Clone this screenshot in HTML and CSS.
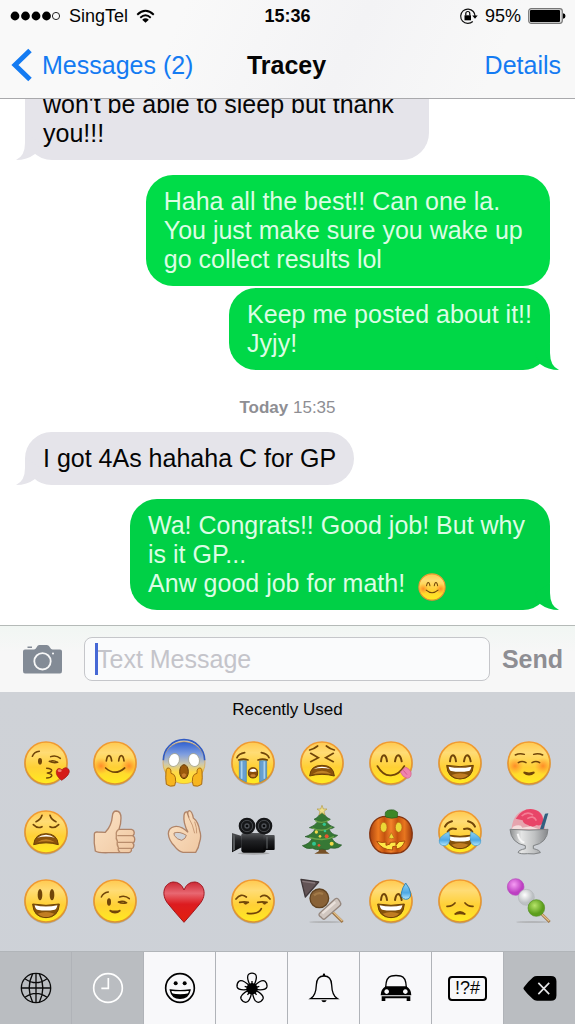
FILE: index.html
```html
<!DOCTYPE html>
<html lang="en">
<head>
<meta charset="utf-8">
<meta name="viewport" content="width=device-width, initial-scale=1">
<title>Tracey</title>
<link rel="stylesheet" href="styles.css">
</head>
<body>
<svg class="defs" width="0" height="0" aria-hidden="true">
  <defs>
    <linearGradient id="skin" x1="0" y1="0" x2="0" y2="1"><stop offset="0" stop-color="#ffc94f"/><stop offset=".25" stop-color="#ffdc75"/><stop offset=".6" stop-color="#ffd035"/><stop offset="1" stop-color="#ffec1f"/></linearGradient>
    <linearGradient id="rim" x1="0" y1="0" x2="0" y2="1"><stop offset="0" stop-color="#f29b31"/><stop offset="1" stop-color="#dc9430"/></linearGradient>
    <radialGradient id="cheek"><stop offset="0" stop-color="#ff8526" stop-opacity=".9"/><stop offset="1" stop-color="#ff9a2e" stop-opacity="0"/></radialGradient>
    <linearGradient id="fear" x1="0" y1="0" x2="0" y2="1"><stop offset="0" stop-color="#2f5fd0"/><stop offset=".3" stop-color="#7f9ee0"/><stop offset=".52" stop-color="#c9c7b4"/><stop offset=".72" stop-color="#ffd94a"/><stop offset="1" stop-color="#ffe52e"/></linearGradient>
    <linearGradient id="red" x1="0" y1="0" x2="0" y2="1"><stop offset="0" stop-color="#cb2834"/><stop offset=".28" stop-color="#e86872"/><stop offset=".55" stop-color="#dc1c20"/><stop offset="1" stop-color="#e3200c"/></linearGradient>
    <linearGradient id="hand" x1="0" y1="0" x2="1" y2="1"><stop offset="0" stop-color="#fbe3c6"/><stop offset="1" stop-color="#f0c8a2"/></linearGradient>
    <linearGradient id="tear" x1="0" y1="0" x2="0" y2="1"><stop offset="0" stop-color="#8fd2f5"/><stop offset=".6" stop-color="#4ea9e4"/><stop offset="1" stop-color="#b5e6fb"/></linearGradient>
    <linearGradient id="pumpkin" x1="0" y1="0" x2="1" y2="0"><stop offset="0" stop-color="#a8410f"/><stop offset=".2" stop-color="#ee7a20"/><stop offset=".35" stop-color="#c4530f"/><stop offset=".5" stop-color="#f3832a"/><stop offset=".65" stop-color="#c4530f"/><stop offset=".82" stop-color="#e8761f"/><stop offset="1" stop-color="#9c3a0c"/></linearGradient>
    <linearGradient id="glass" x1="0" y1="0" x2="1" y2="0"><stop offset="0" stop-color="#8d8f90"/><stop offset=".3" stop-color="#e4e5e5"/><stop offset=".65" stop-color="#bfc1c2"/><stop offset="1" stop-color="#85878a"/></linearGradient>
    <linearGradient id="metal" x1="0" y1="0" x2="0" y2="1"><stop offset="0" stop-color="#55575a"/><stop offset=".4" stop-color="#202124"/><stop offset="1" stop-color="#050506"/></linearGradient>
    <radialGradient id="pink" cx=".4" cy=".35"><stop offset="0" stop-color="#f69cf4"/><stop offset="1" stop-color="#bd3fc2"/></radialGradient>
    <radialGradient id="pearl" cx=".4" cy=".35"><stop offset="0" stop-color="#ffffff"/><stop offset="1" stop-color="#bcc0c3"/></radialGradient>
    <radialGradient id="lime" cx=".4" cy=".35"><stop offset="0" stop-color="#b7e46a"/><stop offset="1" stop-color="#5c9e1c"/></radialGradient>
    <symbol id="face" viewBox="-72 -72 144 144"><circle cy="3" r="65" fill="#7d7468" opacity=".4"/><circle r="63" fill="url(#skin)" stroke="url(#rim)" stroke-width="5"/></symbol>
    <symbol id="happy" viewBox="-72 -72 144 144"><g fill="none" stroke="#704509" stroke-width="6" stroke-linecap="round"><path d="M-30-5Q-28-23-21-23Q-14-22-12-5M12-5Q15-23 22-23Q29-22 32-5"/></g></symbol>
    <symbol id="laugh" viewBox="-72 -72 144 144"><path d="M-40 9Q0 17 40 9Q38 49 0 50Q-38 49-40 9Z" fill="#85520b" stroke="#6b4006" stroke-width="3"/><path d="M-34 13Q0 20 34 13Q32 25 26 26Q0 31-26 26Q-32 25-34 13Z" fill="#fff"/><path d="M-25 38Q0 28 25 38Q14 48 0 48Q-14 48-25 38Z" fill="#c17d22"/></symbol>
    <symbol id="blush" viewBox="-72 -72 144 144"><circle cx="-42" cy="9" r="25" fill="url(#cheek)"/><circle cx="42" cy="9" r="25" fill="url(#cheek)"/></symbol>
    <symbol id="blushing" viewBox="-72 -72 144 144"><use href="#face" x="-72" y="-72" width="144" height="144"/><use href="#blush" x="-72" y="-72" width="144" height="144"/><path d="M-26-6Q-24-22-18-22Q-12-22-10-6M11-6Q13-22 19-22Q25-22 27-6M-28 15Q0 40 29 15" fill="none" stroke="#704509" stroke-width="5" stroke-linecap="round"/></symbol>
    <symbol id="tail" viewBox="0 0 24 27"><path d="M15 0V10Q15 23 24 27Q13 27 5 21L0 10Z" fill="currentColor"/></symbol>
  </defs>
</svg>

<div class="phone">
  <header class="top">
    <div class="status">
      <div class="status-left">
        <svg class="signal" viewBox="0 0 50 10" role="img" aria-label="Signal: 4 of 5"><circle cx="5" cy="5" r="4.4"/><circle cx="15.5" cy="5" r="4.4"/><circle cx="26" cy="5" r="4.4"/><circle cx="36.5" cy="5" r="4.4"/><circle cx="46" cy="5" r="3.6" fill="none" stroke="#222" stroke-width="1"/></svg>
        <span>SingTel</span>
        <svg class="wifi" viewBox="0 0 20 15" role="img" aria-label="Wi-Fi"><g fill="none" stroke="#000" stroke-width="2"><path d="M1.3 5.6Q10-2.6 18.700 5.600M4.500 8.800Q10 3.800 15.500 8.800"/></g><path d="M10 14L6.500 10.800Q10 7.800 13.500 10.800Z"/></svg>
      </div>
      <time class="clock">15:36</time>
      <div class="status-right">
        <svg class="lock" viewBox="0 0 19 17" role="img" aria-label="Rotation lock"><path d="M14.300 3.500A7.200 7.200 0 1 0 13.800 13.500M14.300 3.500Q16 5.500 16 8" fill="none" stroke="#111" stroke-width="1.200"/><path d="M13.200 7.500H18.700L16 10.800Z"/><rect x="5.500" y="7.300" width="6.500" height="5"/><path d="M6.800 7.500V5.500a2 2 0 0 1 4 0V7.500" fill="none" stroke="#000" stroke-width="1.200"/></svg>
        <span>95%</span>
        <svg class="battery" viewBox="0 0 38 16" role="img" aria-label="Battery"><rect x=".7" y=".7" width="33.600" height="14.600" rx="2.500" fill="#ddd" stroke="#777" stroke-width="1.200"/><rect x="2" y="2" width="30" height="12" rx="1"/><path d="M35 5.200Q37.500 5.500 37.500 8T35 10.800Z"/></svg>
      </div>
    </div>
    <nav class="nav">
      <a class="back" href="#"><svg class="chevron" viewBox="0 0 20 32" aria-hidden="true"><path d="M18 1.500L3 16L18 30.500" fill="none" stroke="#147bf2" stroke-width="5"/></svg>Messages (2)</a>
      <h1 class="title">Tracey</h1>
      <a class="details" href="#">Details</a>
    </nav>
  </header>

  <main class="thread">
    <div class="bubble in continued">won't be able to sleep but thank you!!!<svg class="tail"><use href="#tail"/></svg></div>
    <div class="bubble out first">Haha all the best!! Can one la. You just make sure you wake up go collect results lol</div>
    <div class="bubble out second">Keep me posted about it!!<br>Jyjy!<svg class="tail"><use href="#tail"/></svg></div>
    <p class="stamp"><b>Today</b> 15:35</p>
    <div class="bubble in">I got 4As hahaha C for GP<svg class="tail"><use href="#tail"/></svg></div>
    <div class="bubble out last">Wa! Congrats!! Good job! But why is it GP...<br>Anw good job for math! <svg class="inline-emoji" role="img" aria-label="Smiling face"><use href="#blushing"/></svg><svg class="tail"><use href="#tail"/></svg></div>
  </main>

  <form class="composer">
    <button class="camera" type="button" aria-label="Camera"><svg viewBox="0 0 39 29"><path d="M2 4.500H11Q12.500 4.500 13.500 2.500Q14.500 0 16 0H24Q26 0 27 2.500Q28 4.500 29.500 4.500H37Q39 4.500 39 6.500V26Q39 28.500 37 28.500H2Q0 28.500 0 26V6.500Q0 4.500 2 4.500ZM4.500 1.500H9V3H4.500Z" fill="#838b96"/><circle cx="19.500" cy="16.300" r="8.200" fill="none" stroke="#f7f7f7" stroke-width="1.800"/><circle cx="30" cy="8.500" r="1" fill="#fff"/></svg></button>
    <div class="field"><input class="message" type="text" placeholder="Text Message" aria-label="Text Message"><span class="caret"></span></div>
    <button class="send" type="button">Send</button>
  </form>

  <section class="keyboard">
    <h2 class="heading">Recently Used</h2>
    <div class="emojis">
      <button class="key" aria-label="Kiss"><svg viewBox="-72 -72 144 144"><use href="#face" x="-72" y="-72" width="144" height="144"/><ellipse cx="-18" cy="-5" rx="6" ry="10" fill="#704509"/><path d="M-41-20Q-35-34-20-35M14-19Q30-25 43-14M10-5Q22 1 35-2M12-5Q23-9 34-2M2 16Q18 17 17 23Q15 30 4 30Q19 32 17 39Q14 45 2 45" fill="none" stroke="#704509" stroke-width="4.500" stroke-linecap="round" stroke-linejoin="round"/><path d="M47 52Q29 39 31 25Q34 11 48 20Q60 8 69 20Q75 34 47 52Z" fill="#d51c18" stroke="#9e1612" stroke-width="2"/><ellipse cx="41" cy="23" rx="6" ry="4" fill="#f18170"/></svg></button>
      <button class="key" aria-label="Blush"><svg><use href="#blushing"/></svg></button>
      <button class="key" aria-label="Scream"><svg viewBox="-72 -72 144 144"><circle cy="-1" r="63" fill="url(#fear)" stroke="#dba040" stroke-width="2"/><path d="M-62-8A62 62 0 0 1 62-8" fill="none" stroke="#315bc2" stroke-width="5"/><g fill="#fff" stroke="#9c9a82" stroke-width="2"><ellipse cx="-30" cy="-9" rx="16" ry="20" transform="rotate(18 -30 -9)"/><ellipse cx="30" cy="-9" rx="16" ry="20" transform="rotate(-18 30 -9)"/></g><ellipse cy="26" rx="13" ry="21" fill="#9b5a0c" stroke="#693c08" stroke-width="3"/><path d="M-7 35Q0 26 7 35Q4 44-4 43Z" fill="#ca8032"/><g fill="#f7b51f" stroke="#a86b12" stroke-width="3"><path id="palm" d="M-53 64Q-56 45-54 24Q-53 12-43 16Q-38 19-39 31Q-29 32-26 43Q-23 56-28 68Q-42 73-53 64Z"/><use href="#palm" transform="scale(-1 1)"/></g></svg></button>
      <button class="key" aria-label="Sobbing"><svg viewBox="-72 -72 144 144"><use href="#face" x="-72" y="-72" width="144" height="144"/><g fill="#679fd0" stroke="#3e80b7" stroke-width="2"><path d="M-41-7H-20V57Q-31 53-41 45ZM20-7H41V45Q31 53 20 57Z"/></g><path d="M-34-5V47M34-5V47" stroke="#a9d2ee" stroke-width="5"/><path d="M-48-16Q-43-28-25-31M48-16Q43-28 25-31M-43-9Q-29-14-15-9M15-9Q29-14 43-9" fill="none" stroke="#704509" stroke-width="5" stroke-linecap="round"/><path d="M-14 30Q-14 14 0 14Q14 14 14 30Q14 45 0 45Q-14 45-14 30Z" fill="#8a4b0a" stroke="#6b4006" stroke-width="3"/><path d="M-11 25Q-8 17 0 17Q8 17 11 25Q0 29-11 25Z" fill="#fff"/><ellipse cy="38" rx="8" ry="4" fill="#ca8032"/></svg></button>
      <button class="key" aria-label="Tired"><svg viewBox="-72 -72 144 144"><use href="#face" x="-72" y="-72" width="144" height="144"/><path d="M-37-39Q-24-42-13-51M37-39Q24-42 13-51M-34-29L-11-16L-34-4M34-29L11-16L34-4" fill="none" stroke="#704509" stroke-width="5" stroke-linecap="round"/><path d="M-37 39Q-35 7 0 7Q35 7 37 39Q0 29-37 39Z" fill="#8a520c" stroke="#6b4006" stroke-width="3"/><path d="M-25 18Q0 4 25 18Q0 12-25 18Z" fill="#fff"/><path d="M-28 33Q0 14 28 33Q0 28-28 33Z" fill="#bf8126"/></svg></button>
      <button class="key" aria-label="Yum"><svg viewBox="-72 -72 144 144"><use href="#face" x="-72" y="-72" width="144" height="144"/><use href="#happy" x="-72" y="-72" width="144" height="144"/><path d="M-41 9Q-24 39 0 37Q24 36 40 9" fill="none" stroke="#704509" stroke-width="5" stroke-linecap="round"/><path d="M28 27L43 12Q54 15 60 27Q63 43 50 46Q36 45 28 27Z" fill="#ef83ad" stroke="#cf5d86" stroke-width="2"/><path d="M37 22L48 35" stroke="#d45f8c" stroke-width="3"/></svg></button>
      <button class="key" aria-label="Grin"><svg viewBox="-72 -72 144 144"><use href="#face" x="-72" y="-72" width="144" height="144"/><use href="#happy" x="-72" y="-72" width="144" height="144"/><g transform="translate(0 -2)"><use href="#laugh" x="-72" y="-72" width="144" height="144"/></g></svg></button>
      <button class="key" aria-label="Relaxed"><svg viewBox="-72 -72 144 144"><use href="#face" x="-72" y="-72" width="144" height="144"/><use href="#blush" x="-72" y="-72" width="144" height="144"/><path d="M-41-24Q-28-31-14-26M41-24Q28-31 14-26M-32-1Q-21-8-9-1M9-1Q21-8 32-1M-16 28Q0 43 16 28Q0 33-16 28Z" fill="none" stroke="#704509" stroke-width="4.500" stroke-linecap="round"/></svg></button>

      <button class="key" aria-label="Weary"><svg viewBox="-72 -72 144 144"><use href="#face" x="-72" y="-72" width="144" height="144"/><path d="M-30-31Q-16-36-12-50M30-31Q16-36 12-50M-38-22Q-25-9-12-16M38-22Q25-9 12-16" fill="none" stroke="#704509" stroke-width="5" stroke-linecap="round"/><path d="M-37 38Q-34 5 0 5Q34 5 37 38Q0 27-37 38Z" fill="#8a520c" stroke="#6b4006" stroke-width="3"/><path d="M-26 17Q0-1 26 17Q0 10-26 17Z" fill="#fff"/><path d="M-26 31Q0 13 26 31Q0 25-26 31Z" fill="#bf8126"/></svg></button>
      <button class="key" aria-label="Thumbs up"><svg viewBox="-72 -72 144 144"><path d="M-62 6Q-61-1-52 0L-29 1Q-10-19-8-47Q-7-63 4-63Q18-62 18-42Q18-23 12-8H49Q60-5 57 7Q56 10 53 11Q62 16 58 29Q56 31 53 32Q59 37 55 46Q53 49 49 50Q51 61 41 62H-20Q-51 63-59 57Q-64 34-62 6Z" fill="url(#hand)" stroke="#b08468" stroke-width="4"/><path d="M12-8Q2-3 4 9Q2 20 7 27Q5 40 10 46Q8 56 15 61M7 11H53M9 31H53M12 49H49" fill="none" stroke="#b98d6c" stroke-width="4"/></svg></button>
      <button class="key" aria-label="OK hand"><svg viewBox="-72 -72 144 144"><path d="M12 1Q-3-28 0-50Q2-62 9-60L15-43Q7-61 16-64Q24-63 28-42Q43-31 47-4Q53 12 47 29Q44 49 35 61H-3Q-17 58-28 43Q-46 24-47 5Q-46-13-29-16Q-9-20 12 1Z" fill="url(#hand)" stroke="#b08468" stroke-width="4"/><path d="M-30 3Q-13-3 7 10Q6 20-7 25Q-20 23-29 11Z" fill="#cfd2d7" stroke="#b08468" stroke-width="3"/><path d="M14-43Q27-22 32 4M32-31Q39-12 38 4" fill="none" stroke="#c99b77" stroke-width="3"/></svg></button>
      <button class="key" aria-label="Movie camera"><svg viewBox="-72 -72 144 144"><ellipse cx="2" cy="64" rx="48" ry="4" fill="#888" opacity=".6"/><path d="M-63 3L-34 12V46L-63 61Z" fill="url(#metal)"/><path d="M-61 8L-54 10V53L-61 57Z" fill="#55585b"/><rect x="-35" y="3" width="73" height="59" rx="7" fill="url(#metal)"/><rect x="31" y="9" width="34" height="45" rx="3" fill="url(#metal)"/><path d="M42 14V50" stroke="#65686b" stroke-width="3"/><circle cx="-18" cy="-18" r="25" fill="#151618"/><circle cx="33" cy="-18" r="25" fill="#151618"/><g fill="none" stroke="#44474b" stroke-width="3"><circle cx="-18" cy="-18" r="17"/><circle cx="33" cy="-18" r="17"/></g><g fill="#4d5056"><circle cx="-18" cy="-18" r="8"/><circle cx="33" cy="-18" r="8"/></g><g fill="#08090a"><circle cx="-18" cy="-18" r="4"/><circle cx="33" cy="-18" r="4"/></g></svg></button>
      <button class="key" aria-label="Christmas tree"><svg viewBox="-72 -72 144 144"><path d="M-8 45H9L12 58L23 65H-23L-10 58Z" fill="#775127"/><path d="M0-65Q8-45 25-38Q18-33 12-32Q22-18 37-14Q30-9 21-9Q28 8 47 10Q41 17 29 18Q39 36 59 39Q51 49 38 49L26 48Q17 56 0 51Q-18 56-29 49Q-47 53-59 41Q-39 37-29 19L-51 14Q-31 9-20-9L-38-13Q-22-18-12-32L-24-38Q-8-45 0-65Z" fill="#367835" stroke="#285a2b" stroke-width="2"/><path d="M-20-34Q0-23 21-36M-29-12Q3 3 29-15M-38 16Q6 30 36 14" fill="none" stroke="#6ca449" stroke-width="4"/><path d="M0-80L4-69L15-69L6-62L9-51L0-58L-9-51L-6-62L-15-69L-4-69Z" fill="#efe08d" stroke="#b39b45" stroke-width="2"/><g fill="#f1da4a"><circle cx="-17" cy="0" r="5"/><circle cx="29" cy="35" r="6"/><circle cx="-6" cy="13" r="4"/></g><g fill="#e75430"><circle cx="14" cy="13" r="6"/><circle cx="-9" cy="40" r="4"/></g><g fill="#31c590"><circle cx="7" cy="-23" r="5"/><circle cx="-24" cy="35" r="6"/><circle cx="9" cy="-3" r="4"/></g></svg></button>
      <button class="key" aria-label="Jack-o-lantern"><svg viewBox="-72 -72 144 144"><path d="M0-45C25-51 48-42 58-20C73 13 57 51 29 62Q0 67-29 62C-57 51-73 13-58-20C-48-42-25-51 0-45Z" fill="url(#pumpkin)" stroke="#843511" stroke-width="4"/><path d="M-16-45Q-22-64-5-66Q10-70 20-59L19-44Q2-38-16-45Z" fill="#3c8727" stroke="#275b1d" stroke-width="2"/><g fill="#ebd737" stroke="#b56013" stroke-width="2"><ellipse cx="-22" cy="-14" rx="10" ry="15"/><ellipse cx="23" cy="-14" rx="10" ry="15"/><path d="M1 2L10 18Q1 23-7 17Z"/></g><path d="M-43 28Q-25 34-15 30V40L-3 36V31L15 30V40L24 29L42 27Q34 49 16 51V42L5 44V54Q-28 54-43 28Z" fill="#ffe846" stroke="#a94f0b" stroke-width="3"/></svg></button>
      <button class="key" aria-label="Tears of joy"><svg viewBox="-72 -72 144 144"><use href="#face" x="-72" y="-72" width="144" height="144"/><path d="M-45-16Q-40-28-24-32M45-16Q40-28 24-32M-37-1Q-29-15-12-9M37-1Q29-15 12-9" fill="none" stroke="#704509" stroke-width="6" stroke-linecap="round"/><use href="#laugh" x="-72" y="-72" width="144" height="144"/><path id="drop" d="M-33-1Q-25 37-45 41Q-64 41-62 25Q-60 12-33-1Z" fill="url(#tear)" stroke="#419ccc" stroke-width="2"/><use href="#drop" transform="scale(-1 1)"/></svg></button>
      <button class="key" aria-label="Shaved ice"><svg viewBox="-72 -72 144 144"><path d="M-53-6Q-48-67 5-69Q43-67 45-31L49-6Z" fill="#e6a4ae"/><path d="M-40-40Q-22-69 5-69Q42-66 43-31Q35-16 23-21Q8-11-3-21Q-17-24-19-35Z" fill="#e84568"/><path d="M-48-16Q-25-26-20-13L5-17L30-8H-52Z" fill="#f4dedd"/><path d="M-22-48Q-5-63 12-51M-5-40Q14-52 22-34" fill="none" stroke="#f47d94" stroke-width="5"/><path d="M33-8L48-55L58-56L43-6Z" fill="#315f7f"/><path d="M-57-8Q0-3 57-8Q55 33 13 41L13 50Q33 54 34 62Q15 68-4 65Q-28 67-33 61Q-31 54-11 50V41Q-54 33-57-8Z" fill="url(#glass)" stroke="#7f8284" stroke-width="3"/><path d="M-34 5Q-29 27-14 32" fill="none" stroke="#f6f6f6" stroke-width="6"/></svg></button>

      <button class="key" aria-label="Smiley"><svg viewBox="-72 -72 144 144"><use href="#face" x="-72" y="-72" width="144" height="144"/><ellipse cx="-18" cy="-19" rx="7" ry="17" fill="#704509"/><ellipse cx="18" cy="-19" rx="7" ry="17" fill="#704509"/><use href="#laugh" x="-72" y="-72" width="144" height="144"/></svg></button>
      <button class="key" aria-label="Wink"><svg viewBox="-72 -72 144 144"><use href="#face" x="-72" y="-72" width="144" height="144"/><ellipse cx="-18" cy="3" rx="6" ry="11" fill="#704509"/><path d="M-41-12Q-35-25-20-27M14-12Q30-18 43-7M10 3Q22 9 35 5M12 3Q23-2 34 5M-16 28Q0 43 16 28Q0 34-16 28Z" fill="none" stroke="#704509" stroke-width="4.500" stroke-linecap="round"/></svg></button>
      <button class="key" aria-label="Heart"><svg viewBox="-72 -72 144 144"><path d="M0 64Q-26 35-48 8C-70-19-61-53-33-57Q-10-58 0-33Q10-58 33-57C61-53 70-19 48 8Q26 35 0 64Z" fill="url(#red)" stroke="#a01820" stroke-width="3"/></svg></button>
      <button class="key" aria-label="Smirk"><svg viewBox="-72 -72 144 144"><use href="#face" x="-72" y="-72" width="144" height="144"/><path d="M-51-6Q-36-25-20-12M51-6Q38-23 23-13M-40 4Q-26 1-14 4M14 4Q28 1 42 4M-17 37Q17 41 25 23" fill="none" stroke="#704509" stroke-width="5" stroke-linecap="round"/><path d="M-29 4Q-24 15-15 5M28 4Q33 15 41 5" fill="#704509" stroke="#704509" stroke-width="2"/></svg></button>
      <button class="key" aria-label="Oden"><svg viewBox="-72 -72 144 144"><ellipse cx="10" cy="63" rx="48" ry="3" fill="#999" opacity=".5"/><path d="M25 27L62 63" stroke="#9a7143" stroke-width="8"/><path d="M30 29L61 60" stroke="#e2bf86" stroke-width="4"/><path d="M-63-65L-10-57L-50-12Z" fill="#635456" stroke="#41383a" stroke-width="4" stroke-linejoin="round"/><path d="M-59-59L-21-54" stroke="#87787b" stroke-width="4"/><circle cx="-8" cy="-8" r="28" fill="#896237" stroke="#614321" stroke-width="4"/><path d="M-24-17Q-12-28 3-21" fill="none" stroke="#a27a48" stroke-width="7"/><path d="M-7 37L39-6Q45-11 50-4L55 4Q59 10 52 16L9 53Q4 58-2 49Q-13 43-7 37Z" fill="#d1c7c0" stroke="#95877e" stroke-width="4"/><path d="M1 37L40 3" stroke="#e9e0da" stroke-width="7"/></svg></button>
      <button class="key" aria-label="Sweat grin"><svg viewBox="-72 -72 144 144"><use href="#face" x="-72" y="-72" width="144" height="144"/><g transform="translate(0 2)"><use href="#happy" x="-72" y="-72" width="144" height="144"/></g><use href="#laugh" x="-72" y="-72" width="144" height="144"/><path d="M44-54Q56-40 59-23Q60-5 44-5Q29-7 31-24Q34-40 44-54Z" fill="url(#tear)" stroke="#3486b6" stroke-width="3"/></svg></button>
      <button class="key" aria-label="Disappointed"><svg viewBox="-72 -72 144 144"><use href="#face" x="-72" y="-72" width="144" height="144"/><path d="M-39 16Q-24 17-15 6M39 16Q24 17 15 6M-16 40Q0 25 16 40Q0 34-16 40Z" fill="none" stroke="#704509" stroke-width="5" stroke-linecap="round"/></svg></button>
      <button class="key" aria-label="Dango"><svg viewBox="-72 -72 144 144"><ellipse cx="10" cy="63" rx="48" ry="3" fill="#999" opacity=".5"/><path d="M33 34L62 63" stroke="#9a7143" stroke-width="8"/><path d="M35 36L61 61" stroke="#e2bf86" stroke-width="4"/><circle cx="-40" cy="-42" r="25" fill="url(#pink)" stroke="#b74ebd" stroke-width="2"/><circle cx="-8" cy="-11" r="24" fill="url(#pearl)" stroke="#b3b7ba" stroke-width="2"/><circle cx="22" cy="21" r="25" fill="url(#lime)" stroke="#568f25" stroke-width="2"/></svg></button>
    </div>

    <div class="tabs">
      <button class="tab grey" aria-label="Next keyboard"><svg viewBox="0 0 96 96" fill="none" stroke="#0a0a0a" stroke-width="4"><circle cx="48" cy="48" r="44"/><path d="M4 48H92M48 4V92M38 5Q17 48 38 91M58 5Q79 48 58 91M15 20Q48 44 81 20M15 76Q48 52 81 76"/></svg></button>
      <button class="tab grey" aria-label="Recent"><svg viewBox="0 0 96 96" fill="none" stroke="#fff" stroke-width="5"><circle cx="48" cy="48" r="43"/><path d="M49 18V49H28"/></svg></button>
      <button class="tab" aria-label="People"><svg viewBox="0 0 96 96"><circle cx="48" cy="48" r="43" fill="none" stroke="#000" stroke-width="5"/><circle cx="35" cy="34" r="6"/><circle cx="62" cy="34" r="6"/><path d="M19 54Q48 58 78 54Q73 79 48 79Q24 79 19 54Z" fill="#fff" stroke="#000" stroke-width="4"/><path d="M22 64Q48 70 75 64Q67 79 48 79T22 64Z"/></svg></button>
      <button class="tab" aria-label="Nature"><svg viewBox="0 0 96 96"><g fill="none" stroke="#000" stroke-width="4"><g id="petal"><path d="M43 42Q29 13 39 6Q48 1 57 6Q67 13 53 42"/><path d="M48 27V42"/></g><use href="#petal" transform="rotate(72 48 50)"/><use href="#petal" transform="rotate(144 48 50)"/><use href="#petal" transform="rotate(216 48 50)"/><use href="#petal" transform="rotate(288 48 50)"/></g><circle cx="48" cy="50" r="17"/></svg></button>
      <button class="tab" aria-label="Objects"><svg viewBox="0 0 96 96"><path d="M8 80Q24 70 25 39Q26 12 48 12Q70 12 71 39Q72 70 88 80Z" fill="none" stroke="#000" stroke-width="4"/><path d="M44 12Q44 4 48 4T52 12ZM40 85H56Q54 91 48 91T40 85Z"/></svg></button>
      <button class="tab" aria-label="Places"><svg viewBox="0 0 96 96"><path d="M17 46Q18 15 34 12Q48 9 62 12Q78 15 79 46" fill="none" stroke="#000" stroke-width="4"/><path fill-rule="evenodd" d="M17 43H79Q94 52 94 70H2Q2 52 17 43ZM20 52a7 7 0 1 0 .1 0ZM76 52a7 7 0 1 0 .1 0ZM5 73H91V87H80V79H16V87H5Z"/></svg></button>
      <button class="tab" aria-label="Symbols"><span class="symbols">!?#</span></button>
      <button class="tab grey" aria-label="Delete"><svg class="delete" viewBox="0 0 102 76"><path d="M2 34Q15 17 30 4Q34 0 42 0H84Q101 0 101 16V59Q101 75 84 75H42Q34 75 30 71Q13 56 2 41Q-1 37 2 34Z"/><path d="M46 21L79 55M79 21L46 55" stroke="#e4e5e7" stroke-width="5"/></svg></button>
    </div>
  </section>
</div>
</body>
</html>
```
FILE: styles.css
```css
* { box-sizing: border-box; }
body {
  margin: 0;
  font-family: "Liberation Sans", Arial, sans-serif;
  font-size: 25px;
  line-height: 29px;
  color: #050505;
  background: #fff;
}
button, input { font: inherit; color: inherit; border: 0; padding: 0; margin: 0; background: none; }
svg { display: block; overflow: visible; }
h1, h2, p { margin: 0; font-size: inherit; }
a { color: #147bf2; text-decoration: none; }
.defs { position: absolute; }

.phone { display: flex; flex-direction: column; height: 100vh; }

.top {
  background: linear-gradient(115deg, #f9f9f9 30%, #f3f3f5 60%, #f8f8f8 85%);
  border-bottom: 1px solid #a9a9ac;
}
.status {
  display: grid;
  grid-template-columns: 1fr auto 1fr;
  align-items: center;
  height: 32px;
  padding: 0 9px;
  font-size: 18px;
}
.status-left, .status-right { display: flex; align-items: center; }
.status-left { gap: 8px; }
.status-right { gap: 7px; justify-content: flex-end; }
.signal { width: 52px; height: 10px; }
.wifi { width: 19px; height: 15px; }
.clock { font-weight: bold; }
.lock { width: 19px; height: 17px; }
.battery { width: 38px; height: 16px; }

.nav {
  display: grid;
  grid-template-columns: 1fr auto 1fr;
  align-items: center;
  height: 66px;
  padding: 0 14px 0 12px;
}
.back { display: flex; align-items: center; gap: 10px; }
.chevron { width: 20px; height: 32px; }
.title { font-weight: bold; }
.details { justify-self: end; }

.thread {
  flex: 1;
  min-height: 0;
  display: flex;
  flex-direction: column;
  justify-content: flex-end;
  overflow: hidden;
  padding: 0 25px 15px;
}
.bubble {
  position: relative;
  flex: none;
  max-width: 77%;
  padding: 12px 18px;
  border-radius: 27px;
}
.in { align-self: flex-start; background: #e5e4ea; }
.out { align-self: flex-end; color: #dcfde4; background: #00dc48; }
.continued { border-radius: 0 0 27px 27px; margin-bottom: 15px; }
.second { margin-top: 2px; background: #00d847; }
.last { max-width: 80%; margin-top: 14px; background: #00d046; }
.tail { position: absolute; bottom: 0; width: 24px; height: 27px; color: #e5e4ea; }
.in .tail { left: -9px; transform: scaleX(-1); }
.out .tail { right: -9px; }
.second .tail { color: #00d847; }
.last .tail { color: #00d046; }
.stamp { margin: 23px 0 10px; text-align: center; font-size: 17px; color: #8e8e93; }
.inline-emoji { display: inline-block; width: 30px; height: 30px; margin: -4px 0 -4px 5px; vertical-align: -6px; }

.composer {
  display: flex;
  align-items: center;
  gap: 12px;
  padding: 11px 12px 11px 23px;
  background: linear-gradient(#f1f6f3, #f7f7f7 40%);
  border-top: 1px solid #b5bab8;
}
.camera { width: 39px; margin-right: 10px; }
.field { position: relative; flex: 1; min-width: 0; }
.message {
  display: block;
  width: 100%;
  height: 44px;
  padding: 0 12px;
  border: 1px solid #c5c6ca;
  border-radius: 8px;
  background: #fafbfc;
}
.message::placeholder { color: #c4c4ca; opacity: 1; }
.caret { position: absolute; left: 11px; top: 6px; width: 3px; height: 32px; background: #4668d5; }
.send { font-weight: bold; color: #8e8e93; }

.keyboard { background: linear-gradient(#cfd2d7, #cdd1d7); }
.heading { padding: 3px 0 4px; text-align: center; font-size: 17px; font-weight: normal; }
.emojis {
  display: grid;
  grid-template-columns: repeat(8, 1fr);
  grid-auto-rows: 69px;
  padding: 0 12px 16px;
}
.key, .tab { display: flex; align-items: center; justify-content: center; }
.key svg { width: 48px; height: 48px; }
.tabs { display: grid; grid-template-columns: repeat(7, 72fr) 71fr; height: 73px; border-top: 1px solid #b1b5b9; }
.tab { background: #f8f8fa; border-right: 1px solid #b0b3b8; }
.tab:last-child { border-right: 0; }
.tab svg { width: 32px; height: 32px; }
.tab .delete { width: 34px; height: 25px; }
.grey { background: #babdc1; }
.symbols {
  padding: 0 5px;
  border: 2px solid #000;
  border-radius: 4px;
  font-size: 18px;
  line-height: 21px;
}
```
